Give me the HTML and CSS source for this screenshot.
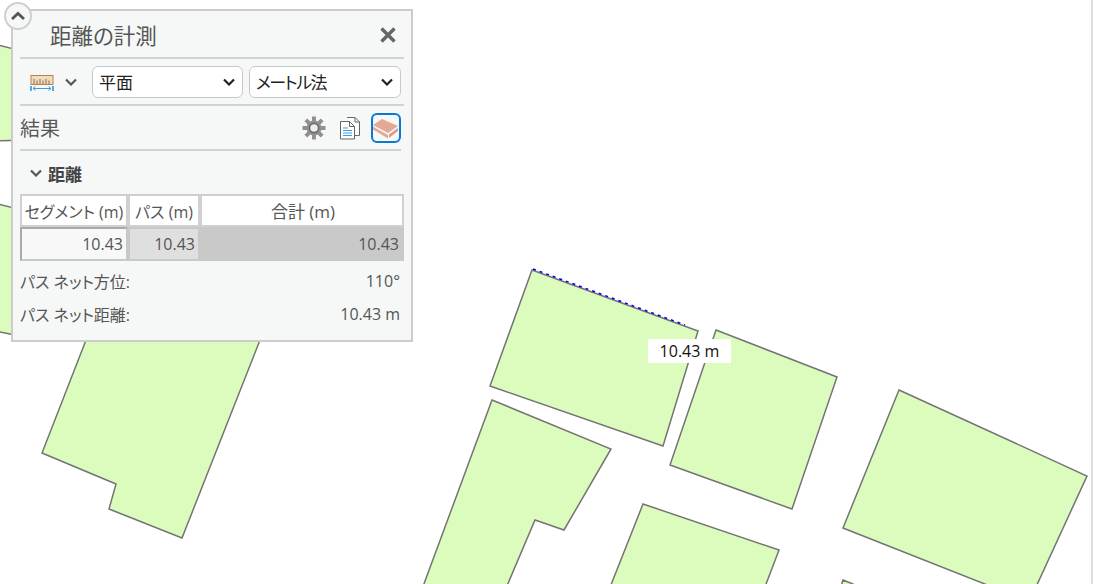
FILE: index.html
```html
<!DOCTYPE html>
<html lang="ja">
<head>
    <meta charset="UTF-8">
    <title>距離の計測</title>
    <link rel="stylesheet" href="styles.css">
</head>
<body>

    <!-- Map canvas -->
    <div class="map">
        <svg class="map-svg" width="1093" height="584" viewBox="0 0 1093 584">
            <g class="parcel">
                <polygon points="-10,43 30,53 30,140 -10,141"/>
                <polygon points="-10,202 30,212 30,338 -10,330"/>
                <polygon points="88,335 262,335 182,538 109,509 116,484 42,453"/>
                <polygon points="532,270 698,331 663,446 490,386"/>
                <polygon points="716,330 837,377 792,509 670,465"/>
                <polygon points="492,400 611,449 564,530 535,520 501,600 418,600"/>
                <polygon points="643,504 779,550 760,600 605,600"/>
                <polygon points="899,390 1087,476 1030,600 1000,590 843,528"/>
                <polygon points="843,580 853,584 853,590 840,590"/>
            </g>
            <line class="measure" x1="533" y1="269" x2="685" y2="325"/>
        </svg>
        <div class="map-label">10.43 m</div>
        <div class="scroll-edge"></div>
    </div>

    <!-- Measure panel -->
    <div class="panel">
        <button class="collapse-btn" type="button">
            <svg width="16" height="10" viewBox="0 0 16 10"><path d="M2 8 L8 2.500 L14 8" class="chev-thick"/></svg>
        </button>

        <div class="panel-head">
            <span class="panel-title">距離の計測</span>
            <svg class="close-icon" width="18" height="18" viewBox="0 0 18 18"><path d="M2.500 2.500 L15.500 15.500 M15.500 2.500 L2.500 15.500"/></svg>
        </div>

        <div class="tool-row">
            <svg class="ruler-icon" width="24" height="16" viewBox="0 0 24 16">
                <rect x="1" y="0.500" width="22" height="9" fill="#f0dcc0" stroke="#b5834e"/>
                <path d="M4 9V4 M7 9V5.500 M10 9V4 M13 9V5.500 M16 9V4 M19 9V5.500" stroke="#8a6a48" fill="none"/>
                <path d="M1 11V16 M23 11V16" stroke="#52a8e8" stroke-width="2" fill="none"/>
                <path d="M3 13.500H21 M5.500 11.500L3 13.500L5.500 15.500 M18.500 11.500L21 13.500L18.500 15.500" stroke="#3f9ade" fill="none"/>
            </svg>
            <svg class="chev-small" width="12" height="8" viewBox="0 0 12 8"><path d="M1 1.500 L6 6.500 L11 1.500"/></svg>
            <div class="select select-plane"><span>平面</span><svg width="12" height="8" viewBox="0 0 12 8"><path d="M1 1.500 L6 6.500 L11 1.500"/></svg></div>
            <div class="select select-unit"><span>メートル法</span><svg width="12" height="8" viewBox="0 0 12 8"><path d="M1 1.500 L6 6.500 L11 1.500"/></svg></div>
        </div>

        <div class="result-row">
            <span class="result-title">結果</span>
            <svg class="gear-icon" width="24" height="24" viewBox="0 0 24 24">
                <g class="gear-teeth">
                    <rect x="10" y="0.500" width="4" height="6"/>
                    <rect x="10" y="0.500" width="4" height="6" transform="rotate(45 12 12)"/>
                    <rect x="10" y="0.500" width="4" height="6" transform="rotate(90 12 12)"/>
                    <rect x="10" y="0.500" width="4" height="6" transform="rotate(135 12 12)"/>
                    <rect x="10" y="0.500" width="4" height="6" transform="rotate(180 12 12)"/>
                    <rect x="10" y="0.500" width="4" height="6" transform="rotate(225 12 12)"/>
                    <rect x="10" y="0.500" width="4" height="6" transform="rotate(270 12 12)"/>
                    <rect x="10" y="0.500" width="4" height="6" transform="rotate(315 12 12)"/>
                </g>
                <circle class="gear-body" cx="12" cy="12" r="7.500"/>
                <circle class="gear-hole" cx="12" cy="12" r="4.500"/>
            </svg>
            <svg class="copy-icon" width="22" height="24" viewBox="0 0 22 24">
                <path d="M8 1.500h8l4.500 4.500v13.500h-5" fill="#fff" stroke="#666"/>
                <path d="M16 1.500v4.500h4.500" fill="none" stroke="#666"/>
                <path d="M1.500 5.500h9l5 5v12.500h-14z" fill="#fff" stroke="#666"/>
                <path d="M10.500 5.500v5h5" fill="none" stroke="#666"/>
                <path d="M4 12h5M4 14.500h9M4 17h9M4 19.500h9" stroke="#3f9ade" fill="none"/>
            </svg>
            <div class="eraser-btn">
                <svg width="26" height="24" viewBox="0 0 26 24">
                    <path d="M0 9 L9 3 L25 10 L15 17 Z" fill="#e5a895"/>
                    <path d="M0 10.500 L15 19 L15 22.500 L0 13.500 Z" fill="#e5a895"/>
                    <path d="M16 18.500 L25 12 L25 15 L16 22 Z" fill="#dc9a86"/>
                </svg>
            </div>
        </div>

        <div class="section-head">
            <svg width="12" height="8" viewBox="0 0 12 8"><path d="M1 1.500 L6 6.500 L11 1.500"/></svg>
            <span>距離</span>
        </div>

        <div class="grid">
            <div class="cell head">セグメント (m)</div>
            <div class="cell head">パス (m)</div>
            <div class="cell head head-total">合計 (m)</div>
            <div class="cell val-seg">10.43</div>
            <div class="cell val-path">10.43</div>
            <div class="cell val-total">10.43</div>
        </div>

        <div class="info-row"><span>パス ネット方位:</span><span>110°</span></div>
        <div class="info-row"><span>パス ネット距離:</span><span>10.43 m</span></div>
    </div>

</body>
</html>
```

FILE: styles.css
```css
body {
    margin: 0;
    width: 1093px;
    height: 584px;
    overflow: hidden;
    background-color: #ffffff;
    font-family: "Open Sans", "Noto Sans CJK JP", sans-serif;
    font-feature-settings: "palt";
    color: #555555;
}

/* Map canvas */
.map {
    position: absolute;
    left: 0;
    top: 0;
    width: 1093px;
    height: 584px;
}

.map-svg {
    display: block;
}

.parcel polygon {
    fill: #dcfcbe;
    stroke: #747474;
    stroke-width: 1.500;
}

.measure {
    stroke: #0000ee;
    stroke-width: 1.500;
    stroke-dasharray: 3 4;
}

.map-label {
    position: absolute;
    left: 648px;
    top: 339px;
    width: 83px;
    height: 24px;
    line-height: 24px;
    text-align: center;
    background-color: #ffffff;
    color: #111111;
    font-size: 16px;
}

.scroll-edge {
    position: absolute;
    left: 1091px;
    top: 0;
    width: 2px;
    height: 584px;
    background-color: #dddddd;
}

/* Measure panel */
.panel {
    position: absolute;
    left: 11px;
    top: 9px;
    width: 398px;
    height: 329px;
    border: 2px solid #cccccc;
    background-color: #f6f8f7;
}

.collapse-btn {
    position: absolute;
    left: -9px;
    top: -9px;
    width: 28px;
    height: 28px;
    padding: 0;
    border: 2px solid #cfcfcf;
    border-radius: 50%;
    background-color: #f6f8f7;
    display: flex;
    align-items: center;
    justify-content: center;
}

.chev-thick {
    fill: none;
    stroke: #555555;
    stroke-width: 2.800;
}

.panel-head {
    display: flex;
    align-items: center;
    justify-content: space-between;
    height: 44px;
    margin: 0 7px;
    padding: 2px 7px 0 30px;
    border-bottom: 2px solid #d2d2d2;
}

.panel-title {
    margin-bottom: 2px;
    font-size: 21.500px;
    color: #555555;
}

.close-icon path {
    fill: none;
    stroke: #666666;
    stroke-width: 3.400;
}

.tool-row {
    display: flex;
    align-items: center;
    height: 45px;
    margin: 0 7px;
    padding-left: 10px;
    border-bottom: 2px solid #d2d2d2;
}

.ruler-icon {
    margin-top: 3px;
    margin-right: 11px;
}

.chev-small {
    margin-right: 15px;
}

.chev-small path,
.section-head svg path {
    fill: none;
    stroke: #555555;
    stroke-width: 2.200;
}

.select {
    display: flex;
    align-items: center;
    justify-content: space-between;
    box-sizing: border-box;
    height: 32px;
    padding: 0 7px 0 6px;
    border: 1.500px solid #c8c8c8;
    border-radius: 6px;
    background-color: #ffffff;
    color: #222222;
    font-size: 17px;
}

.select svg path {
    fill: none;
    stroke: #222222;
    stroke-width: 2.200;
}

.select-plane {
    width: 151px;
    margin-right: 6px;
}

.select-unit {
    width: 152px;
}

.select-unit span {
    letter-spacing: -1.500px;
}

.result-row {
    display: flex;
    align-items: center;
    height: 43px;
    margin: 0 10px 0 7px;
    border-bottom: 2px solid #d2d2d2;
}

.result-title {
    flex: 1;
    font-size: 20px;
    color: #5a5a5a;
}

.gear-icon {
    margin-right: 13px;
}

.gear-teeth rect {
    fill: #909090;
}

.gear-body {
    fill: #909090;
}

.gear-hole {
    fill: #eeeeee;
    stroke: #666666;
    stroke-width: 1.500;
}

.copy-icon {
    margin-right: 10px;
}

.eraser-btn {
    display: flex;
    align-items: center;
    justify-content: center;
    box-sizing: border-box;
    width: 30px;
    height: 30px;
    border: 2px solid #0a78d4;
    border-radius: 6px;
}

.section-head {
    display: flex;
    align-items: center;
    height: 24px;
    margin: 10px 0 9px 17px;
    font-size: 17px;
    font-weight: 700;
    color: #444444;
}

.section-head svg {
    margin-right: 6px;
}

/* Results table */
.grid {
    display: grid;
    grid-template-columns: 108px 72px 204px;
    grid-template-rows: 32px 34px;
    width: 384px;
    margin: 0 7px;
    border-top: 1px solid #cccccc;
    font-size: 16px;
}

.cell {
    display: flex;
    align-items: center;
    justify-content: flex-end;
    box-sizing: border-box;
    padding: 0 3px;
    white-space: nowrap;
}

.head {
    justify-content: center;
    padding: 0;
    background-color: #ffffff;
    border: 2px solid #d0d0d0;
    border-top-width: 1px;
    color: #555555;
}

.head-total {
    padding-left: 2px;
    font-size: 17px;
}

.val-seg {
    background-color: #f8f8f8;
    border: 2px solid #a9a9a9;
    border-right-color: #c8c8c8;
    border-bottom-color: #c8c8c8;
}

.val-path {
    background-color: #dfdfdf;
    border: 2px solid #c8c8c8;
}

.val-total {
    padding-right: 5px;
    background-color: #c9c9c9;
}

.info-row {
    display: flex;
    justify-content: space-between;
    align-items: center;
    height: 33px;
    margin: 0 11px 0 7px;
    font-size: 16px;
    color: #555555;
}

.grid + .info-row {
    margin-top: 3px;
}
```
